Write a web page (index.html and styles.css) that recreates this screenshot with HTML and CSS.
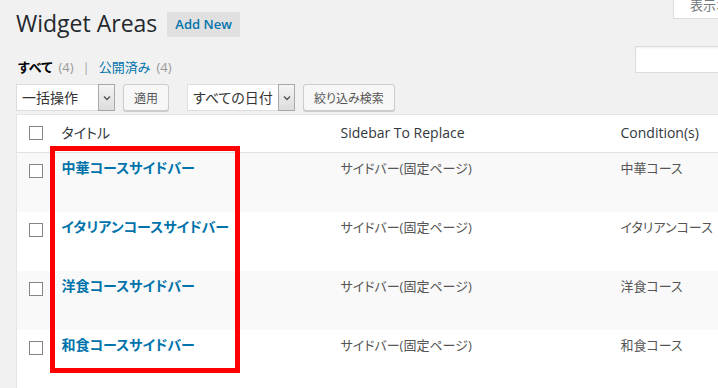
FILE: index.html
```html
<!DOCTYPE html>
<html lang="ja">
<head>
  <meta charset="UTF-8">
  <meta name="viewport" content="width=device-width, initial-scale=1.0">
  <link rel="stylesheet" href="styles.css">
  <title>Widget Areas</title>
</head>
<body>

<div class="wrap">
  <div class="page-head">
    <h1 class="page-title">Widget Areas</h1>
    <a class="add-new" href="#">Add New</a>
    <div class="screen-options">表示オプション</div>
  </div>

  <div class="filter-row">
    <ul class="views">
      <li class="current">すべて</li>
      <li class="count">(4)</li>
      <li class="sep">|</li>
      <li><a href="#">公開済み</a></li>
      <li class="count">(4)</li>
    </ul>
    <input class="search-input" type="search">
  </div>

  <div class="tablenav">
    <div class="actions">
      <div class="select select-bulk">
        <span class="select-text">一括操作</span>
        <span class="select-arrow"><svg width="8" height="6" viewBox="0 0 8 6"><path d="M1 1.5l3 3 3-3" fill="none" stroke="#555" stroke-width="1.4"/></svg></span>
      </div>
      <button class="button">適用</button>
    </div>
    <div class="actions">
      <div class="select select-date">
        <span class="select-text">すべての日付</span>
        <span class="select-arrow"><svg width="8" height="6" viewBox="0 0 8 6"><path d="M1 1.5l3 3 3-3" fill="none" stroke="#555" stroke-width="1.4"/></svg></span>
      </div>
      <button class="button">絞り込み検索</button>
    </div>
  </div>

  <div class="table-wrap">
    <table class="list-table">
      <colgroup>
        <col class="col-cb">
        <col class="col-title">
        <col class="col-sidebar">
        <col>
      </colgroup>
      <thead>
        <tr>
          <th class="check-column"><span class="checkbox"></span></th>
          <th>タイトル</th>
          <th>Sidebar To Replace</th>
          <th>Condition(s)</th>
        </tr>
      </thead>
      <tbody>
        <tr class="alt">
          <td class="check-column"><span class="checkbox"></span></td>
          <td><a class="row-title" href="#">中華コースサイドバー</a></td>
          <td>サイドバー(固定ページ)</td>
          <td>中華コース</td>
        </tr>
        <tr>
          <td class="check-column"><span class="checkbox"></span></td>
          <td><a class="row-title" href="#">イタリアンコースサイドバー</a></td>
          <td>サイドバー(固定ページ)</td>
          <td>イタリアンコース</td>
        </tr>
        <tr class="alt">
          <td class="check-column"><span class="checkbox"></span></td>
          <td><a class="row-title" href="#">洋食コースサイドバー</a></td>
          <td>サイドバー(固定ページ)</td>
          <td>洋食コース</td>
        </tr>
        <tr>
          <td class="check-column"><span class="checkbox"></span></td>
          <td><a class="row-title" href="#">和食コースサイドバー</a></td>
          <td>サイドバー(固定ページ)</td>
          <td>和食コース</td>
        </tr>
      </tbody>
    </table>
    <div class="highlight"></div>
  </div>
</div>

</body>
</html>
```

FILE: styles.css
```css
html, body {
  overflow: hidden;
}
body {
  margin: 0;
  background: #f1f1f1;
  color: #444;
  font-family: "Open Sans", "Noto Sans CJK JP", sans-serif;
  font-size: 13px;
  font-feature-settings: "palt";
}
a {
  color: #0073aa;
  text-decoration: none;
}
.wrap {
  width: 790px;
  padding-left: 16px;
}

/* heading */
.page-head {
  display: flex;
  align-items: flex-start;
  height: 46px;
}
.page-title {
  margin: 9px 0 0;
  font-size: 23px;
  font-weight: 400;
  line-height: 29px;
  color: #23282d;
}
.add-new {
  margin: 12px 0 0 10px;
  padding: 4px 8px;
  background: #e0e0e0;
  font-weight: 600;
  line-height: 17px;
}
.screen-options {
  margin: -8px 0 0 auto;
  width: 133px;
  box-sizing: border-box;
  padding: 3px 16px;
  line-height: 20px;
  background: #fff;
  border: 1px solid #ddd;
  border-top: none;
  color: #72777c;
  white-space: nowrap;
}

/* views + search */
.filter-row {
  display: flex;
  justify-content: space-between;
  align-items: flex-start;
  height: 37px;
}
.views {
  display: flex;
  margin: 0;
  padding: 11px 0 0 2px;
  list-style: none;
  line-height: 20px;
}
.views .current {
  font-weight: 700;
  color: #000;
}
.views .count {
  margin-left: 6px;
  color: #999;
}
.views .sep {
  margin: 0 9px;
  color: #a0a5aa;
}
.search-input {
  width: 171px;
  height: 27px;
  margin: 0;
  box-sizing: border-box;
  border: 1px solid #ddd;
  background: #fff;
  box-shadow: inset 0 1px 2px rgba(0, 0, 0, 0.07);
}

/* bulk actions */
.tablenav {
  display: flex;
  gap: 18px;
  height: 27px;
  margin-top: 1px;
}
.actions {
  display: flex;
  gap: 8px;
}
.select {
  display: flex;
  box-sizing: border-box;
  height: 27px;
  border: 1px solid #ddd;
  background: #fff;
  color: #333;
  font-size: 14px;
}
.select-bulk {
  width: 99px;
}
.select-date {
  width: 108px;
}
.select-text {
  flex: 1;
  padding-left: 5px;
  line-height: 25px;
  white-space: nowrap;
  overflow: hidden;
}
.select-arrow {
  display: flex;
  align-items: center;
  justify-content: center;
  width: 17px;
  box-sizing: border-box;
  border: 1px solid #a8a8a8;
  margin: -1px -1px -1px 0;
  background: linear-gradient(#f4f4f4, #dcdcdc);
}
.button {
  height: 27px;
  padding: 0 10px;
  border: 1px solid #ccc;
  border-radius: 3px;
  background: #f7f7f7;
  box-shadow: 0 1px 0 #ccc;
  color: #555;
  font-family: "Open Sans", "Noto Sans CJK JP", sans-serif;
  font-size: 12px;
  font-feature-settings: "palt";
}

/* list table */
.table-wrap {
  position: relative;
  margin-top: 3px;
}
.list-table {
  width: 790px;
  table-layout: fixed;
  border-collapse: collapse;
  border: 1px solid #e5e5e5;
  background: #fff;
}
.col-cb {
  width: 35px;
}
.col-title {
  width: 279px;
}
.col-sidebar {
  width: 280px;
}
.list-table th {
  padding: 8px 10px 9px;
  border-bottom: 1px solid #e1e1e1;
  vertical-align: top;
  text-align: left;
  font-size: 14px;
  font-weight: 400;
  line-height: 20px;
  color: #32373c;
}
.list-table td {
  height: 20px;
  padding: 5px 10px 34px;
  vertical-align: top;
  line-height: 20px;
  color: #555;
}
.list-table .alt td {
  background: #f9f9f9;
}
.list-table .check-column {
  padding: 11px 0 0 12px;
}
.checkbox {
  display: block;
  width: 14px;
  height: 14px;
  box-sizing: border-box;
  border: 1px solid #858585;
  background: #fff;
}
.row-title {
  font-size: 14px;
  font-weight: 700;
}

/* annotation box drawn over the title column */
.highlight {
  position: absolute;
  left: 34px;
  top: 32px;
  width: 190px;
  height: 227px;
  box-sizing: border-box;
  border: 5px solid #f00;
}
```
